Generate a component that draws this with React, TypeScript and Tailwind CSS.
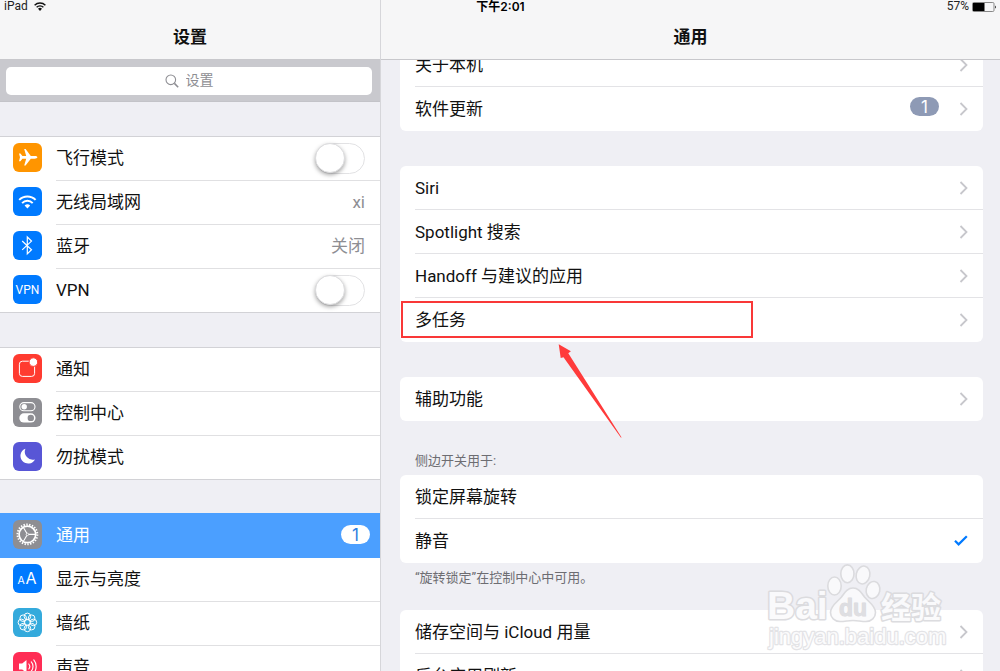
import React, { type ReactNode } from "react";

type IconProps = { bg: string; children: ReactNode };

function AppIcon({ bg, children }: IconProps) {
  return (
    <span className={`mb-[3px] size-[29px] shrink-0 overflow-hidden rounded-md text-white ${bg}`}>
      <svg viewBox="0 0 29 29" className="size-full" fill="none" stroke="currentColor" aria-hidden="true">
        {children}
      </svg>
    </span>
  );
}

const PlaneIcon = () => (
  <AppIcon bg="bg-[#ff9500]">
    <path
      stroke="none"
      fill="currentColor"
      d="M24.4 14.3c0-.9-1.4-1.4-2.8-1.4h-3.8L12.6 6h-1.4l2 6.9H9.4L7.4 10.4H6l1 3.9-1 3.9h1.4l2-2.5h3.8l-2 6.9h1.4l5.2-6.9h3.8c1.4 0 2.8-.5 2.8-1.4z"
    />
  </AppIcon>
);

const WifiIcon = () => (
  <AppIcon bg="bg-[#007aff]">
    <path strokeWidth="2" d="M6.200 12.900a11.600 11.600 0 0 1 16.400 0M9.100 16.100a7.400 7.400 0 0 1 10.600 0" />
    <path stroke="none" fill="currentColor" d="M11.600 18.500a4 4 0 0 1 5.600 0l-2.800 2.900z" />
  </AppIcon>
);

const BluetoothIcon = () => (
  <AppIcon bg="bg-[#007aff]">
    <path strokeWidth="1.2" d="M9.200 10l9.300 8.800-4.200 4.100V6l4.200 4.100-9.300 8.800" />
  </AppIcon>
);

const VpnIcon = () => (
  <AppIcon bg="bg-[#007aff]">
    <text x="14.5" y="18.600" textAnchor="middle" fontSize="12" stroke="none" fill="currentColor" fontFamily="Roboto, sans-serif">
      VPN
    </text>
  </AppIcon>
);

const NoticeIcon = () => (
  <AppIcon bg="bg-[#ff3b30]">
    <rect x="6.4" y="7.2" width="15.2" height="15.2" rx="3" strokeWidth="1" />
    <circle cx="20.4" cy="8.1" r="4.3" fill="currentColor" stroke="#ff3b30" strokeWidth="1" />
  </AppIcon>
);

const ControlIcon = () => (
  <AppIcon bg="bg-[#8e8e93]">
    <rect x="6.8" y="4.6" width="15.2" height="8.2" rx="4.1" strokeWidth="1.1" />
    <circle cx="11.2" cy="8.7" r="2.7" fill="currentColor" stroke="none" />
    <rect x="6.3" y="15.3" width="16.2" height="9.2" rx="4.6" fill="currentColor" stroke="none" />
    <circle cx="17.8" cy="19.9" r="3.2" fill="#8e8e93" stroke="none" />
  </AppIcon>
);

const MoonIcon = () => (
  <AppIcon bg="bg-[#5856d6]">
    <path stroke="none" fill="currentColor" d="M12.400 6.700A7.700 7.700 0 1 0 22 17.400 8 8 0 0 1 12.400 6.700z" />
  </AppIcon>
);

const GearIcon = () => (
  <AppIcon bg="bg-[#8e8e93]">
    <circle cx="14.4" cy="14.4" r="9.9" strokeWidth="2" strokeDasharray="1.400 1.427" />
    <circle cx="14.4" cy="14.4" r="8.3" strokeWidth="1.700" />
    <circle cx="14.4" cy="14.4" r="1.200" strokeWidth="0.800" />
    <path strokeWidth="1.1" d="M15.600 14.400h7M13.800 13.300l-3.500-6M13.800 15.500l-3.500 6" />
  </AppIcon>
);

const DisplayIcon = () => (
  <AppIcon bg="bg-[#007aff]">
    <g stroke="none" fill="currentColor" fontFamily="Inter, sans-serif">
      <text x="4.6" y="19.6" fontSize="10.5">A</text>
      <text x="12.4" y="19.6" fontSize="16">A</text>
    </g>
  </AppIcon>
);

const PETALS = [
  [20.4, 14.4], [18.6, 18.6], [14.4, 20.4], [10.2, 18.6],
  [8.4, 14.4], [10.2, 10.2], [14.4, 8.4], [18.6, 10.2],
];

const WallpaperIcon = () => (
  <AppIcon bg="bg-[#34aadc]">
    <g strokeWidth="1">
      {PETALS.map(([x, y]) => (
        <circle key={`${x}-${y}`} cx={x} cy={y} r="3.3" />
      ))}
      <circle cx="14.4" cy="14.4" r="3" />
    </g>
  </AppIcon>
);

const SoundIcon = () => (
  <AppIcon bg="bg-[#ff2d55]">
    <path stroke="none" fill="currentColor" d="M6 11.600h3.200l4.300-3.600v13l-4.300-3.600H6z" />
    <path strokeWidth="1.1" strokeLinecap="round" d="M15.800 12a4 4 0 0 1 0 5M18.300 9.900a7 7 0 0 1 0 9.200M20.800 7.900a10.400 10.400 0 0 1 0 13.200" />
  </AppIcon>
);

function Switch({ label }: { label: string }) {
  return (
    <input
      type="checkbox"
      role="switch"
      aria-label={label}
      className="relative h-[31px] w-[50px] translate-y-px appearance-none rounded-full border border-[#e2e2e4] bg-white before:absolute before:-left-px before:-top-px before:size-[30px] before:rounded-full before:border before:border-[#dcdcde] before:bg-white before:shadow-[0_2px_4px_rgba(0,0,0,0.35)]"
    />
  );
}

type SideRowProps = {
  icon: ReactNode;
  label: string;
  trailing?: ReactNode;
  toggle?: boolean;
  active?: boolean;
  last?: boolean;
};

function SideRow({ icon, label, trailing, toggle, active, last }: SideRowProps) {
  const body = (
    <>
      {icon}
      <span
        className={`flex h-full flex-1 items-center justify-between border-b pb-[2px] pr-[15px] ${
          active ? "border-[#4b9fff]" : last ? "border-transparent" : "border-[#e0e0e2]"
        }`}
      >
        {label}
        {toggle ? <Switch label={label} /> : trailing}
      </span>
    </>
  );
  return (
    <li className={active ? "bg-[#4b9fff] text-white" : ""}>
      {toggle ? (
        <div className="flex h-11 items-center gap-[14px] pl-[13px]">{body}</div>
      ) : (
        <button type="button" className="flex h-11 w-full items-center gap-[14px] pl-[13px] text-left">
          {body}
        </button>
      )}
    </li>
  );
}

function Badge({ tone, children }: { tone: string; children: ReactNode }) {
  return (
    <span className={`flex h-[19px] w-[29px] items-center justify-center rounded-full font-['Inter','Roboto',sans-serif] text-[17px] ${tone}`}>
      {children}
    </span>
  );
}

const Chevron = () => (
  <svg viewBox="0 0 9 14" className="h-[14px] w-[9px] shrink-0" fill="none" stroke="#c7c7cc" strokeWidth="1.8" aria-hidden="true">
    <path d="M1.500 1l6 6-6 6" />
  </svg>
);

const Check = () => (
  <svg viewBox="0 0 14 11" className="h-[11px] w-[14px] shrink-0" fill="none" stroke="#007aff" strokeWidth="2.2" aria-hidden="true">
    <path d="M1 5.800l3.600 3.600L12.800 1.200" />
  </svg>
);

type RowProps = { label: string; badge?: string; end?: ReactNode; children?: ReactNode };

function Row({ label, badge, end = <Chevron />, children }: RowProps) {
  return (
    <li className="group relative pl-[15px]">
      <button
        type="button"
        className="flex h-11 w-full items-center justify-between border-b border-[#e3e3e6] pr-[15px] text-left group-last:border-transparent"
      >
        {label}
        <span className="flex items-center gap-5">
          {badge && (
            <span className="pb-1">
              <Badge tone="bg-[#8e9ab5] text-white">{badge}</Badge>
            </span>
          )}
          {end}
        </span>
      </button>
      {children}
    </li>
  );
}

const Card = ({ children }: { children: ReactNode }) => <ul className="rounded-md bg-white">{children}</ul>;

function Callout() {
  return (
    <>
      <span className="pointer-events-none absolute left-px top-[3px] h-[37px] w-[352px] border-2 border-[#f93838]" />
      <svg viewBox="0 0 64 94" className="pointer-events-none absolute left-[158px] top-[46px] z-10 h-[94px] w-16" fill="#ff3b3b" aria-hidden="true">
        <path d="M.7.3L12.900 7.300 10.300 9.200 63.600 93.500 62.800 93.500 5.500 13.200 2.700 14z" />
      </svg>
    </>
  );
}

function StatusBar() {
  return (
    <div className="absolute inset-x-0 top-0 z-20 grid grid-cols-3 items-center pl-1 pr-[3px] text-[12px] leading-[13px] text-[#222]">
      <span className="flex items-center gap-[6px]">
        iPad
        <svg viewBox="0 0 12 9" className="h-[9px] w-3" fill="none" stroke="#111" aria-hidden="true">
          <path strokeWidth="1.4" d="M.6 3.200a7.800 7.800 0 0 1 10.800 0M2.600 5.300a4.900 4.900 0 0 1 6.800 0" />
          <path stroke="none" fill="#111" d="M4 6.800a2.900 2.900 0 0 1 4 0L6 9z" />
        </svg>
      </span>
      <span className="text-center font-['Inter','Noto_Sans_CJK_SC',sans-serif] font-semibold text-black">下午2:01</span>
      <span className="flex items-center justify-end gap-[3px]">
        57%
        <svg viewBox="0 0 25 10" className="h-[10px] w-[25px]" aria-hidden="true">
          <rect x=".5" y=".5" width="21.5" height="9" rx="1.2" fill="none" stroke="#888" />
          <rect x="1" y="1" width="11.5" height="8" fill="#000" />
          <path d="M23 3.400c1.400.5 1.400 2.700 0 3.200z" fill="#444" />
        </svg>
      </span>
    </div>
  );
}

const PaneHeader = ({ children }: { children: ReactNode }) => (
  <header className="relative z-10 flex h-[60px] shrink-0 items-end justify-center border-b border-[#c8c8cc] bg-[#f6f6f7] pb-[10px]">
    <h1 className="text-[17px] font-semibold leading-6">{children}</h1>
  </header>
);

function Watermark() {
  return (
    <svg viewBox="0 0 184 88" className="pointer-events-none absolute bottom-[19px] right-[52px] h-[88px] w-[184px]" aria-hidden="true">
      <g fill="#fbfbfc" stroke="#d9d9dc" strokeWidth="1.6" strokeLinejoin="round" opacity="0.9">
        <ellipse cx="70.5" cy="22" rx="6.7" ry="9" />
        <ellipse cx="83.4" cy="9.800" rx="6.600" ry="8.900" />
        <ellipse cx="99" cy="11" rx="6.8" ry="9" transform="rotate(12 99 11)" />
        <ellipse cx="109" cy="26" rx="6.8" ry="8.6" transform="rotate(12 109 26)" />
        <path d="M89 24c6 0 8.500 5 11.500 9 4 5 11 8.500 11 15.500 0 5-4 9-9.500 9-5 0-8.500-1-13-1s-8 1-13 1c-5.500 0-9.500-4-9.500-9 0-7 7-10.500 11-15.500 3-4 5.500-9 11.500-9z" />
        <g fontFamily="'Liberation Sans', sans-serif" fontWeight="700" paintOrder="stroke" strokeWidth="3">
          <text x="3" y="55" fontSize="39">Bai</text>
          <text x="75" y="52" fontSize="23" fill="#dcdcdf" strokeWidth="1">du</text>
          <text x="117" y="54" fontSize="30" fontFamily="'Noto Sans CJK SC', sans-serif">经验</text>
        </g>
        <text x="5" y="80" fontSize="22" fontFamily="'Liberation Sans', sans-serif" stroke="#e1e1e4" strokeWidth="2.400" paintOrder="stroke">
          jingyan.baidu.com
        </text>
      </g>
    </svg>
  );
}

function Sidebar() {
  return (
    <nav className="flex w-[38%] shrink-0 flex-col">
      <PaneHeader>设置</PaneHeader>
      <div className="h-[42px] shrink-0 border-b border-[#c3c3c8] bg-[#c9c9ce] pb-[7px] pl-[6px] pr-2 pt-[7px]">
        <label className="flex h-7 items-center justify-center gap-[7px] rounded-[5px] bg-white pb-px">
          <svg viewBox="0 0 14 14" className="size-[14px]" fill="none" stroke="#8e8e93" strokeWidth="1.1" aria-hidden="true">
            <circle cx="5.8" cy="5.8" r="4.800" />
            <path strokeWidth="1.5" d="M9.400 9.400l3.800 3.800" />
          </svg>
          <input
            type="search"
            aria-label="设置"
            placeholder="设置"
            className="field-sizing-content bg-transparent pb-[3px] text-[14px] leading-5 outline-none placeholder:text-[#8e8e93]"
          />
        </label>
      </div>
      <ul className="mt-[34px] border-t border-[#d2d2d6] bg-white shadow-[inset_0_-1px_0_#d2d2d6]">
        <SideRow icon={<PlaneIcon />} label="飞行模式" toggle />
        <SideRow icon={<WifiIcon />} label="无线局域网" trailing={<span className="text-[#8e8e93]">xi</span>} />
        <SideRow icon={<BluetoothIcon />} label="蓝牙" trailing={<span className="text-[#8e8e93]">关闭</span>} />
        <SideRow icon={<VpnIcon />} label="VPN" toggle last />
      </ul>
      <ul className="mt-[34px] border-t border-[#d2d2d6] bg-white shadow-[inset_0_-1px_0_#d2d2d6]">
        <SideRow icon={<NoticeIcon />} label="通知" />
        <SideRow icon={<ControlIcon />} label="控制中心" />
        <SideRow icon={<MoonIcon />} label="勿扰模式" last />
      </ul>
      <ul className="mt-[33px] border-t border-[#4b9fff] bg-white">
        <SideRow
          icon={<GearIcon />}
          label="通用"
          active
          trailing={
            <span className="-mr-[5px]">
              <Badge tone="bg-white text-[#2f7de0]">1</Badge>
            </span>
          }
        />
        <SideRow icon={<DisplayIcon />} label="显示与亮度" />
        <SideRow icon={<WallpaperIcon />} label="墙纸" />
        <SideRow icon={<SoundIcon />} label="声音" />
      </ul>
    </nav>
  );
}

export default function App() {
  return (
    <div className="relative flex h-screen overflow-hidden bg-[#efeff4] font-['Roboto','Noto_Sans_CJK_SC',sans-serif] text-[17px] leading-6 text-[#111]">
      <StatusBar />
      <Sidebar />
      <main className="flex min-w-0 flex-1 flex-col border-l border-[#d6d6da]">
        <PaneHeader>通用</PaneHeader>
        <div className="-mt-[17px] pl-[19px] pr-[17px]">
          <Card>
            <Row label="关于本机" />
            <Row label="软件更新" badge="1" />
          </Card>
          <div className="mt-[35px]">
            <Card>
              <Row label="Siri" />
              <Row label="Spotlight 搜索" />
              <Row label="Handoff 与建议的应用" />
              <Row label="多任务">
                <Callout />
              </Row>
            </Card>
          </div>
          <div className="mt-[35px]">
            <Card>
              <Row label="辅助功能" />
            </Card>
          </div>
          <section className="mt-[30px]">
            <h2 className="pb-1 pl-[15px] text-[13px] leading-5 text-[#6d6d72]">侧边开关用于:</h2>
            <Card>
              <Row label="锁定屏幕旋转" end={null} />
              <Row label="静音" end={<Check />} />
            </Card>
            <p className="pl-[15px] pt-[5px] text-[13px] leading-5 text-[#6d6d72]">“旋转锁定”在控制中心中可用。</p>
          </section>
          <div className="mt-[22px]">
            <Card>
              <Row label="储存空间与 iCloud 用量" />
              <Row label="后台应用刷新" />
            </Card>
          </div>
        </div>
      </main>
      <Watermark />
    </div>
  );
}
